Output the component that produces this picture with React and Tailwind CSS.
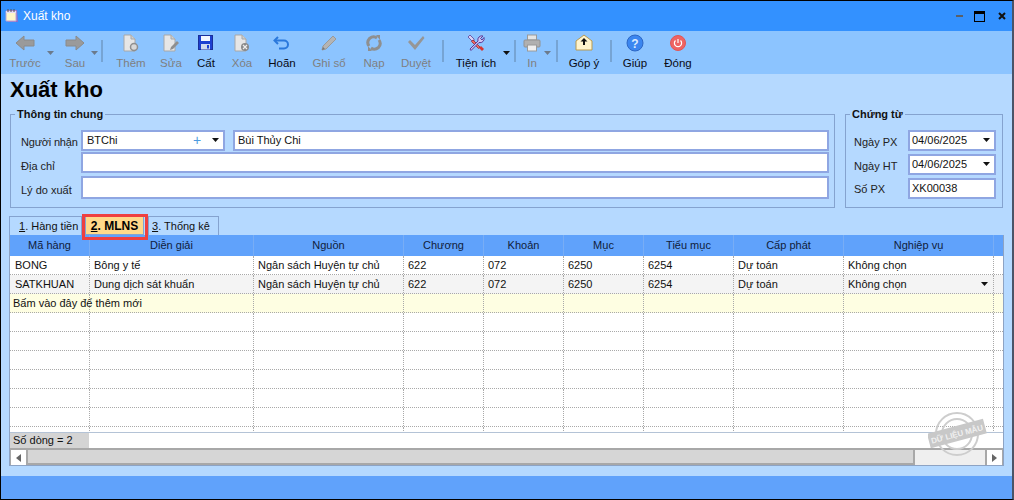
import React from "react";

const Arrow = ({ c = "bg-black" }) => (
  <svg width="7" height="4" viewBox="0 0 7 4" className="block"><path d="M0 0h7L3.5 4z" fill={c === "gray" ? "#6b7a8c" : "#111"} /></svg>
);

const Doc = ({ children }) => (
  <svg width="20" height="18" viewBox="0 0 20 18">
    <path d="M3 1h7l4 4v12H3z" fill="#e6e6e6" stroke="#a8a8a8" />
    <path d="M10 1v4h4" fill="#cfcfcf" stroke="#a8a8a8" />
    {children}
  </svg>
);

const icons = {
  left: <svg width="20" height="18" viewBox="0 0 20 18"><path d="M1 9l8-7v4h10v6H9v4z" fill="#9a9a9a" stroke="#8a8a8a" /></svg>,
  right: <svg width="20" height="18" viewBox="0 0 20 18"><path d="M19 9l-8-7v4H1v6h10v4z" fill="#9a9a9a" stroke="#8a8a8a" /></svg>,
  add: <Doc><circle cx="13" cy="13" r="3.5" fill="#d8d8d8" stroke="#8f8f8f" strokeWidth="1.5" /></Doc>,
  edit: <Doc><path d="M9 16l1-3 6-6 2 2-6 6z" fill="#8f8f8f" /></Doc>,
  save: (
    <svg width="18" height="18" viewBox="0 0 18 18">
      <rect x="1.5" y="1.5" width="14" height="14" fill="#1d3fd0" stroke="#1a2f9a" />
      <rect x="4" y="2" width="9" height="5" fill="#f2f6ff" />
      <rect x="4" y="10" width="9" height="5.5" fill="#cfd8ee" />
      <rect x="10" y="11" width="2" height="3.5" fill="#1d3fd0" />
    </svg>
  ),
  del: <Doc><circle cx="13" cy="13" r="4" fill="#8a8a8a" /><path d="M11 11l4 4M15 11l-4 4" stroke="#eee" strokeWidth="1.2" /></Doc>,
  undo: (
    <svg width="18" height="18" viewBox="0 0 18 18" fill="none">
      <path d="M5 3L1.5 6.5 5 10" stroke="#2a78dc" strokeWidth="2" />
      <path d="M2 6.5h9a4 4 0 0 1 0 8H6" stroke="#2a78dc" strokeWidth="2" />
    </svg>
  ),
  pencil: <svg width="18" height="18" viewBox="0 0 18 18"><path d="M2 16l1-4L13 2l3 3L6 15z" fill="#b4b4b4" stroke="#999" /><path d="M2 16l1-3 2 2z" fill="#777" /></svg>,
  reload: (
    <svg width="18" height="18" viewBox="0 0 18 18" fill="none">
      <path d="M4 12A6 6 0 0 1 4.5 4.5C7 2.5 10 2.5 12 4" stroke="#8f8f8f" strokeWidth="3" />
      <path d="M14 6a6 6 0 0 1-.5 7.5C11 15.500 8 15.500 6 14" stroke="#8f8f8f" strokeWidth="3" />
      <path d="M11 1l4 0 0 5zM7 17l-4 0 0-5z" fill="#8f8f8f" />
    </svg>
  ),
  check: <svg width="18" height="18" viewBox="0 0 18 18"><path d="M1 8l2-2 5 5L16 2l1.500 2L8 16z" fill="#969696" /></svg>,
  tools: (
    <svg width="18" height="18" viewBox="0 0 18 18">
      <path d="M3 1l4 4 0 2-2 0-4-4z" fill="#d9d2f2" stroke="#5a3d9a" strokeWidth="0.8" />
      <path d="M6 6l7 7-1.500 1.500-7-7z" fill="#e8686a" stroke="#a02b2b" strokeWidth="0.8" />
      <path d="M12 14l2-2 3 3-2 2z" fill="#d8322f" />
      <path d="M3 15l8-8a4 4 0 0 1 5-5l-2.500 2.500 1.500 1.500L17 3.500a4 4 0 0 1-5 5l-8 8z" fill="#cfc5f2" stroke="#5a3d9a" />
    </svg>
  ),
  print: (
    <svg width="18" height="18" viewBox="0 0 18 18">
      <rect x="4.500" y="1" width="9" height="5" fill="#e4e4e4" stroke="#9a9a9a" />
      <rect x="1" y="6" width="16" height="7" rx="1" fill="#b0b0b0" stroke="#929292" />
      <rect x="4.500" y="11" width="9" height="6" fill="#efefef" stroke="#9a9a9a" />
    </svg>
  ),
  mail: (
    <svg width="18" height="18" viewBox="0 0 18 18">
      <path d="M1 7l8-6 8 6v9H1z" fill="#fff4cc" stroke="#b89a50" />
      <path d="M9 4l3.500 3.500H10V11H8V7.500H5.500z" fill="#111" />
    </svg>
  ),
  help: (
    <svg width="18" height="18" viewBox="0 0 18 18">
      <circle cx="9" cy="9" r="8" fill="#3b86f0" stroke="#2d67c4" />
      <text x="9" y="13.500" textAnchor="middle" fontSize="12" fontWeight="700" fill="#dcebff" fontFamily="Liberation Sans">?</text>
    </svg>
  ),
  power: (
    <svg width="18" height="18" viewBox="0 0 18 18" fill="none">
      <circle cx="9" cy="9" r="7.500" fill="#ee6464" stroke="#e25555" />
      <path d="M6.500 6.500a3.600 3.600 0 1 0 5 0" stroke="#fff" strokeWidth="1.200" />
      <path d="M9 5v4" stroke="#fff" strokeWidth="1.200" />
    </svg>
  ),
};

const Btn = ({ w, icon, label, off, arrow, arrowGray }) => (
  <div className={`relative flex flex-col items-center shrink-0 ${w}`}>
    <div className="h-[22px] flex items-center justify-center">{icons[icon]}</div>
    <div className={`text-[11.5px] leading-[14px] mt-[2px] whitespace-nowrap ${off ? "text-[#7f7f7f]" : "text-[#0a0a14]"}`}>{label}</div>
    {arrow && <span className={`absolute top-[19px] ${arrow}`}><Arrow c={arrowGray ? "gray" : "bg-black"} /></span>}
  </div>
);

const Sep = () => <div className="w-[2px] h-[22px] mt-[8px] bg-[#76a4d4] shrink-0" />;

const Field = ({ className, children }) => (
  <div className={`bg-white border-2 border-[#8fa6e2] flex items-center text-[11px] text-[#111] shrink-0 ${className}`}>{children}</div>
);

const cols = [
  ["Mã hàng", "w-[80px]"],
  ["Diễn giải", "w-[164px]"],
  ["Nguồn", "w-[150px]"],
  ["Chương", "w-[80px]"],
  ["Khoản", "w-[80px]"],
  ["Mục", "w-[80px]"],
  ["Tiểu mục", "w-[90px]"],
  ["Cấp phát", "w-[110px]"],
  ["Nghiệp vụ", "w-[150px]"],
  ["", "flex-1"],
];

const Row = ({ cells = [], bg = "bg-white", arrow, note }) => (
  <div className={`flex h-[19px] shrink-0 border-b border-dotted border-[#a9a9a9] ${bg}`}>
    {cols.map(([, w], i) => (
      <div key={i} className={`relative ${w} border-r border-dotted border-[#a9a9a9] ${i === 0 ? "pl-[5px]" : "pl-[4px]"} text-[11px] leading-[18px] text-[#111] whitespace-nowrap ${i === 9 ? "border-r-0" : ""}`}>
        {i === 0 && note ? <span className="relative -left-[2px]">{note}</span> : cells[i]}
        {i === 8 && arrow && <span className="absolute right-[5px] top-[7px] left-auto"><Arrow /></span>}
      </div>
    ))}
  </div>
);

const Stamp = () => (
  <svg width="60" height="50" viewBox="0 0 60 50" className="absolute left-[927px] top-[408px] pointer-events-none">
    <g fill="none" stroke="#cdcdcd" strokeWidth="2">
      <circle cx="29" cy="25" r="21" />
      <circle cx="29" cy="25" r="15" />
    </g>
    <g transform="rotate(-15 29 25)">
      <rect x="0" y="17" width="58" height="15" fill="#c8c8c8" />
      <text x="29" y="28" textAnchor="middle" fontSize="8" fontWeight="700" fill="#f0f0f0" fontFamily="Liberation Sans">DỮ LIỆU MẪU</text>
    </g>
  </svg>
);

export default function App() {
  return (
    <div className="relative w-[1014px] h-[500px] flex flex-col overflow-hidden border-t border-l border-b border-r-2 border-t-black border-l-black border-b-black border-r-[#4a5468] bg-[#b5d9ff] font-['Liberation_Sans',sans-serif]">
      <div className="h-[30px] shrink-0 bg-[#3391ff] flex items-center">
        <svg width="16" height="16" viewBox="0 0 16 16" className="ml-[3px]">
          <path d="M3 2h10l1 12H4z" fill="#8f6fc8" />
          <path d="M2 3h10v10H2z" fill="#fff6c8" stroke="#b9a6d8" />
          <path d="M2 3h10v2H2z" fill="#e7dcf6" />
          <path d="M4 1v3M7 1v3M10 1v3" stroke="#555" />
        </svg>
        <span className="ml-[3px] text-[12px] text-white">Xuất kho</span>
        <div className="ml-auto flex items-center">
          <div className="w-[7px] h-[2px] bg-[#5a6068]" />
          <div className="ml-[11px] w-[11px] h-[11px] border border-black border-t-[3px]" />
          <svg width="8" height="8" viewBox="0 0 8 8" className="ml-[13px] mr-[6px]"><path d="M1 1l6 6M7 1L1 7" stroke="#111" strokeWidth="2" /></svg>
        </div>
      </div>

      <div className="h-[43px] shrink-0 bg-[#8cc4ff] flex pt-[1px]">
        <Btn w="w-[48px]" icon="left" label="Trước" off arrow="-right-[5px]" arrowGray />
        <Btn w="w-[52px]" icon="right" label="Sau" off arrow="right-[3px]" arrowGray />
        <Sep />
        <Btn w="w-[56px]" icon="add" label="Thêm" off />
        <Btn w="w-[24px]" icon="edit" label="Sửa" off />
        <Btn w="w-[46px]" icon="save" label="Cất" />
        <Btn w="w-[26px]" icon="del" label="Xóa" off />
        <Btn w="w-[54px]" icon="undo" label="Hoãn" />
        <Btn w="w-[40px]" icon="pencil" label="Ghi sổ" off />
        <Btn w="w-[50px]" icon="reload" label="Nạp" off />
        <Btn w="w-[34px]" icon="check" label="Duyệt" off />
        <div className="w-[9px] shrink-0" />
        <Sep />
        <Btn w="w-[64px]" icon="tools" label="Tiện ích" arrow="-right-[2px]" />
        <div className="w-[6px] shrink-0" />
        <Sep />
        <Btn w="w-[32px]" icon="print" label="In" off arrow="-right-[3px]" arrowGray />
        <div className="w-[8px] shrink-0" />
        <Sep />
        <Btn w="w-[52px]" icon="mail" label="Góp ý" />
        <Sep />
        <Btn w="w-[46px]" icon="help" label="Giúp" />
        <Btn w="w-[40px]" icon="power" label="Đóng" />
      </div>

      <div className="flex-1 flex flex-col px-[8px] min-h-0">
        <h1 className="text-[22px] leading-[26px] font-bold text-black mt-[3px] ml-[1px] shrink-0">Xuất kho</h1>

        <div className="flex gap-[10px] mt-[4px] mx-[1px] h-[101px] shrink-0">
          <fieldset className="flex-1 border border-[#85a3cf] pl-[6px] pr-[5px] min-w-0">
            <legend className="-ml-[2px] px-[2px] text-[11px] leading-[14px] font-bold text-[#111]">Thông tin chung</legend>
            <div className="flex items-center h-[21px] mt-[9px]">
              <span className="w-[64px] text-[11px] tracking-[-0.2px] text-[#222] shrink-0 pl-[4px] pt-[4px] whitespace-nowrap">Người nhận</span>
              <Field className="w-[144px] h-[21px] relative pl-[4px]">
                BTChi
                <span className="absolute left-[110px] top-[0px] text-[14px] leading-[17px] text-[#4d9be0]">+</span>
                <span className="absolute right-[4px] top-[6px]"><Arrow /></span>
              </Field>
              <Field className="ml-[8px] flex-1 h-[21px] !shrink pl-[3px]">Bùi Thủy Chi</Field>
            </div>
            <div className="flex items-center h-[21px] mt-[1px]">
              <span className="w-[64px] text-[11px] text-[#222] shrink-0 pl-[4px] pt-[7px]">Địa chỉ</span>
              <Field className="flex-1 h-[21px] !shrink" />
            </div>
            <div className="flex items-center h-[23px] mt-[3px]">
              <span className="w-[64px] text-[11px] text-[#222] shrink-0 pl-[4px] pt-[5px]">Lý do xuất</span>
              <Field className="flex-1 h-[23px] !shrink" />
            </div>
          </fieldset>

          <fieldset className="w-[158px] shrink-0 border border-[#85a3cf] pl-[8px] pr-[6px]">
            <legend className="-ml-[4px] px-[2px] text-[11px] leading-[14px] font-bold text-[#111]">Chứng từ</legend>
            {[["Ngày PX", "04/06/2025", true, "pt-[4px]"], ["Ngày HT", "04/06/2025", true, "pt-[4px]"], ["Số PX", "XK00038", false, "pt-[2px]"]].map(([l, v, a, p], i) => (
              <div key={l} className={`flex items-center h-[21px] ${i === 0 ? "mt-[9px]" : "mt-[3px]"}`}>
                <span className={`w-[54px] text-[11px] text-[#222] shrink-0 ${p}`}>{l}</span>
                <Field className="flex-1 h-[21px] relative !shrink pl-[2px]">
                  {v}
                  {a && <span className="absolute right-[4px] top-[6px]"><Arrow /></span>}
                </Field>
              </div>
            ))}
          </fieldset>
        </div>

        <div className="flex items-end h-[19px] mt-[8px] shrink-0 text-[11px] text-[#111]">
          <div className="w-[73px] h-[19px] border border-b-0 border-[#85a3cf] flex items-center pl-[9px]"><span><u>1</u>. Hàng tiền</span></div>
          <div className="relative w-[59px] h-[19px] ml-[3px] bg-[#ffd98a] border border-[#85a3cf] font-bold text-[12px] flex items-center justify-center text-black">
            <span><u>2</u>. MLNS</span>
            <div className="absolute -left-[4px] -top-[3px] -right-[5px] -bottom-[6px] border-[3px] border-[#ee4040]" />
          </div>
          <div className="w-[71px] h-[19px] ml-[4px] border border-b-0 border-[#85a3cf] flex items-center pl-[3px]"><span><u>3</u>. Thống kê</span></div>
        </div>

        <div className="h-[231px] shrink-0 flex flex-col border border-t-0 border-[#8da3c4]">
          <div className="flex h-[21px] shrink-0 bg-[#60a2fb]">
            {cols.map(([h, w], i) => (
              <div key={i} className={`${w} flex items-center justify-center text-[11px] text-[#10203a] ${i === 9 ? "" : "border-r border-[#78adf5]"}`}>{h}</div>
            ))}
          </div>
          <div className="h-[176px] shrink-0 overflow-hidden flex flex-col bg-white">
            <Row cells={["BONG", "Bông y tế", "Ngân sách Huyện tự chủ", "622", "072", "6250", "6254", "Dự toán", "Không chọn"]} />
            <Row bg="bg-[#f4f4f4]" arrow cells={["SATKHUAN", "Dung dịch sát khuẩn", "Ngân sách Huyện tự chủ", "622", "072", "6250", "6254", "Dự toán", "Không chọn"]} />
            <Row bg="bg-[#fefee2]" note="Bấm vào đây để thêm mới" />
            {Array.from({ length: 7 }).map((_, i) => <Row key={i} />)}
          </div>
          <div className="h-[16px] shrink-0 flex border-t border-[#b4c3d6] bg-white">
            <div className="w-[79px] bg-[#d4d4d4] text-[11px] leading-[15px] text-[#111] pl-[3px]">Số dòng = 2</div>
          </div>
          <div className="flex-1 flex border-t-2 border-[#a8a8a8] bg-[#efefef]">
            <div className="w-[18px] bg-white border-l border-r-2 border-[#a8a8a8] flex items-center justify-center">
              <svg width="5" height="8" viewBox="0 0 5 8"><path d="M5 0v8L0 4z" fill="#666" /></svg>
            </div>
            <div className="w-[887px] bg-[#d6d6d6] border-r-2 border-b-2 border-[#a8a8a8]" />
            <div className="flex-1" />
            <div className="w-[18px] bg-white border-l-2 border-r border-[#a8a8a8] flex items-center justify-center">
              <svg width="5" height="8" viewBox="0 0 5 8"><path d="M0 0v8l5-4z" fill="#666" /></svg>
            </div>
          </div>
        </div>
      </div>

      <div className="h-[23px] shrink-0 bg-[#60a2fb]" />
      <Stamp />
    </div>
  );
}
